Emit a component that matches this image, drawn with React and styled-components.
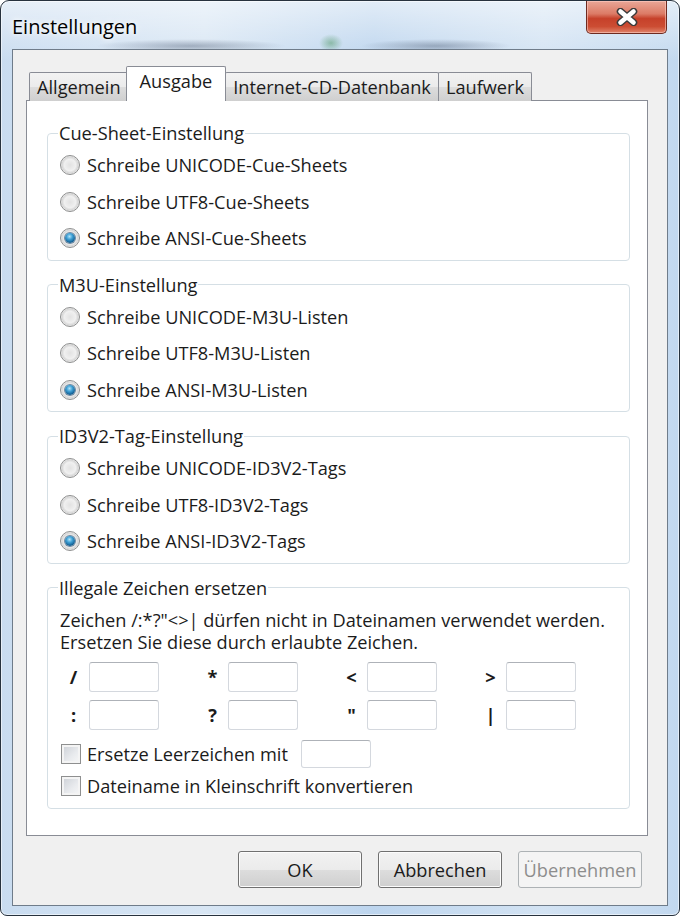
import React from "react";
import styled, { createGlobalStyle, css } from "styled-components";

const GlobalStyle = createGlobalStyle`
  html, body {
    margin: 0;
    padding: 0;
    background: #ffffff;
  }
  * {
    box-sizing: border-box;
  }
`;

const groups = [
  {
    title: "Cue-Sheet-Einstellung",
    options: ["Schreibe UNICODE-Cue-Sheets", "Schreibe UTF8-Cue-Sheets", "Schreibe ANSI-Cue-Sheets"],
  },
  {
    title: "M3U-Einstellung",
    options: ["Schreibe UNICODE-M3U-Listen", "Schreibe UTF8-M3U-Listen", "Schreibe ANSI-M3U-Listen"],
  },
  {
    title: "ID3V2-Tag-Einstellung",
    options: ["Schreibe UNICODE-ID3V2-Tags", "Schreibe UTF8-ID3V2-Tags", "Schreibe ANSI-ID3V2-Tags"],
  },
];

const tabs = ["Allgemein", "Ausgabe", "Internet-CD-Datenbank", "Laufwerk"];

const charRows = [
  ["/", "*", "<", ">"],
  [":", "?", "\"", "|"],
];

export default function App() {
  return (
    <>
      <GlobalStyle />
      <Window>
        <TitleBar>
          <Title>Einstellungen</Title>
          <CloseButton aria-label="Schließen">
            <svg width="24" height="18" viewBox="0 0 24 18">
              <path
                d="M5.5 3.5 L18.5 14.5 M18.5 3.5 L5.5 14.5"
                stroke="#3b3b3b"
                strokeWidth="7.5"
                strokeLinecap="round"
                fill="none"
              />
              <path
                d="M5.5 3.5 L18.5 14.5 M18.5 3.5 L5.5 14.5"
                stroke="#ffffff"
                strokeWidth="4.6"
                strokeLinecap="round"
                fill="none"
              />
            </svg>
          </CloseButton>
        </TitleBar>

        <Client>
          <TabStrip>
            {tabs.map((t) => (
              <Tab key={t} $active={t === "Ausgabe"}>
                {t}
              </Tab>
            ))}
          </TabStrip>

          <Panel>
            {groups.map((g) => (
              <Group key={g.title}>
                <Legend>{g.title}</Legend>
                {g.options.map((o, i) => (
                  <OptionRow key={o}>
                    <Radio $checked={i === 2} />
                    <Label>{o}</Label>
                  </OptionRow>
                ))}
              </Group>
            ))}

            <Group $tall>
              <Legend>Illegale Zeichen ersetzen</Legend>
              <Hint>
                Zeichen /:*?"&lt;&gt;| dürfen nicht in Dateinamen verwendet werden.
                <br />
                Ersetzen Sie diese durch erlaubte Zeichen.
              </Hint>
              <CharGrid>
                {charRows.flat().map((c) => (
                  <CharCell key={c}>
                    <CharLabel>{c}</CharLabel>
                    <TextBox />
                  </CharCell>
                ))}
              </CharGrid>
              <CheckRow $first>
                <CheckBox />
                <Label>Ersetze Leerzeichen mit</Label>
                <TextBox $small />
              </CheckRow>
              <CheckRow>
                <CheckBox />
                <Label>Dateiname in Kleinschrift konvertieren</Label>
              </CheckRow>
            </Group>
          </Panel>

          <ButtonRow>
            <Button>OK</Button>
            <Button>Abbrechen</Button>
            <Button disabled>Übernehmen</Button>
          </ButtonRow>
        </Client>
      </Window>
    </>
  );
}

const uiFont = css`
  font-family: "Open Sans", "Noto Sans", "Liberation Sans", sans-serif;
  font-size: 18.2px;
  color: #1b1b1b;
`;

const Window = styled.div`
  width: 680px;
  height: 916px;
  display: flex;
  flex-direction: column;
  padding: 0 11px 9px 11px;
  border: 1px solid #27323e;
  border-radius: 9px 9px 7px 7px;
  background:
    linear-gradient(180deg, rgba(255, 255, 255, 0.55) 0px, rgba(255, 255, 255, 0) 60px),
    linear-gradient(90deg, #c9dcf0 0%, #d8e6f4 30%, #bdd5ee 55%, #d3e3f3 80%, #c2d8ef 100%);
  box-shadow: inset 0 0 0 1px rgba(255, 255, 255, 0.55);
  overflow: hidden;
`;

const TitleBar = styled.div`
  height: 48px;
  flex-shrink: 0;
  display: flex;
  align-items: flex-start;
  justify-content: space-between;
  margin: 0 -11px;
  padding: 0 11px;
  background:
    radial-gradient(ellipse 95px 7px at 190px 45px, rgba(70, 85, 110, 0.4), rgba(70, 85, 110, 0) 100%),
    radial-gradient(ellipse 12px 9px at 330px 42px, rgba(60, 140, 80, 0.45), rgba(60, 140, 80, 0) 100%),
    radial-gradient(ellipse 75px 7px at 435px 45px, rgba(70, 85, 110, 0.4), rgba(70, 85, 110, 0) 100%);
`;

const Title = styled.div`
  ${uiFont};
  font-size: 20px;
  color: #000;
  margin-top: 12px;
  text-shadow: 0 0 8px rgba(255, 255, 255, 0.9), 0 0 4px rgba(255, 255, 255, 0.9);
`;

const CloseButton = styled.div`
  width: 81px;
  height: 33px;
  margin-right: 1px;
  display: flex;
  align-items: center;
  justify-content: center;
  border: 1px solid #6e2a20;
  border-top: none;
  border-radius: 0 0 5px 5px;
  background: linear-gradient(
    180deg,
    #e9a797 0%,
    #dc7b66 40%,
    #c6412a 55%,
    #cc4d33 80%,
    #e0846c 100%
  );
  box-shadow: inset 0 0 0 1px rgba(255, 210, 200, 0.55);
`;

const Client = styled.div`
  flex: 1;
  display: flex;
  flex-direction: column;
  background: #f0f0f0;
  border: 1px solid #6f7c8a;
  padding: 16px 0 0 13px;
`;

const TabStrip = styled.div`
  display: flex;
  align-items: flex-end;
  height: 35px;
  padding-left: 3px;
  margin-bottom: -1px;
  position: relative;
  z-index: 1;
`;

const Tab = styled.div`
  ${uiFont};
  height: 29px;
  padding: 0 7px;
  display: flex;
  align-items: center;
  border: 1px solid #898c95;
  border-bottom: none;
  margin-right: -1px;
  border-radius: 2px 2px 0 0;
  background: linear-gradient(180deg, #f2f2f2 0%, #ebebeb 50%, #dddddd 51%, #cfcfcf 100%);
  ${({ $active }) =>
    $active &&
    css`
      height: 35px;
      padding: 0 13px 6px;
      margin: 0 -1px 0 -2px;
      background: #ffffff;
      position: relative;
      z-index: 2;
    `}
`;

const Panel = styled.div`
  width: 622px;
  height: 736px;
  background: #ffffff;
  border: 1px solid #898c95;
  display: flex;
  flex-direction: column;
  gap: 12px;
  padding: 20px 17px 0 20px;
`;

const Group = styled.fieldset`
  margin: 0;
  min-width: 0;
  border: 1px solid #d5dfe5;
  border-radius: 4px;
  padding: 2px 11px 3px 12px;
  ${({ $tall }) =>
    $tall &&
    css`
      padding-top: 4px;
      padding-bottom: 6px;
    `}
`;

const Legend = styled.legend`
  ${uiFont};
  line-height: 24px;
  padding: 0 1px;
  margin-left: -2px;
`;

const OptionRow = styled.div`
  height: 36.5px;
  display: flex;
  align-items: center;
  gap: 7px;
`;

const Label = styled.span`
  ${uiFont};
  white-space: nowrap;
`;

const Radio = styled.span`
  width: 20px;
  height: 20px;
  flex-shrink: 0;
  border-radius: 50%;
  border: 1px solid #8e8f8f;
  background: radial-gradient(circle at 50% 50%, #e2e2e2 0%, #f0f0f0 45%, #d7d7d7 62%, #f6f6f6 75%, #ffffff 100%);
  position: relative;
  ${({ $checked }) =>
    $checked &&
    css`
      &::after {
        content: "";
        position: absolute;
        left: 4px;
        top: 4px;
        width: 10px;
        height: 10px;
        border-radius: 50%;
        background: radial-gradient(circle at 45% 35%, #aee4fb 0%, #3f9fd3 35%, #125f94 70%, #0b3f68 100%);
        box-shadow: 0 0 0 1px rgba(25, 70, 110, 0.6);
      }
    `}
`;

const Hint = styled.div`
  ${uiFont};
  line-height: 22px;
  margin-top: 5px;
  white-space: nowrap;
`;

const CharGrid = styled.div`
  display: grid;
  grid-template-columns: repeat(4, 98px);
  column-gap: 41px;
  row-gap: 8px;
  margin-top: 9px;
  margin-left: 2px;
`;

const CharCell = styled.div`
  display: flex;
  align-items: center;
  height: 30px;
`;

const CharLabel = styled.span`
  ${uiFont};
  font-weight: 700;
  width: 27px;
  text-align: center;
  padding-right: 4px;
`;

const TextBox = styled.span`
  display: block;
  width: 70px;
  height: 30px;
  border: 1px solid #d4d8de;
  border-top-color: #aeb2b8;
  border-radius: 3px;
  background: #ffffff;
  ${({ $small }) =>
    $small &&
    css`
      height: 28px;
      margin-left: 7px;
    `}
`;

const CheckRow = styled.div`
  height: 32px;
  display: flex;
  align-items: center;
  gap: 6px;
  margin-left: 1px;
  ${({ $first }) =>
    $first &&
    css`
      margin-top: 8px;
    `}
`;

const CheckBox = styled.span`
  width: 20px;
  height: 20px;
  flex-shrink: 0;
  border: 1px solid #8e8f8f;
  box-shadow: inset 0 0 0 2px #f4f4f4;
  background: linear-gradient(135deg, #cbcfd5 0%, #e9ebee 60%, #f7f7f7 100%);
`;

const ButtonRow = styled.div`
  display: flex;
  justify-content: flex-end;
  gap: 16px;
  margin-top: 15px;
  padding-right: 25px;
`;

const Button = styled.button`
  ${uiFont};
  width: 124px;
  height: 37px;
  padding: 0;
  border: 1px solid #707070;
  border-radius: 3px;
  box-shadow: inset 0 0 0 1px #fcfcfc;
  background: linear-gradient(180deg, #f2f2f2 0%, #ebebeb 50%, #dddddd 51%, #cfcfcf 100%);
  &:disabled {
    color: #8d8d8d;
    border-color: #adb2b5;
    background: #f4f4f4;
    box-shadow: none;
  }
`;
